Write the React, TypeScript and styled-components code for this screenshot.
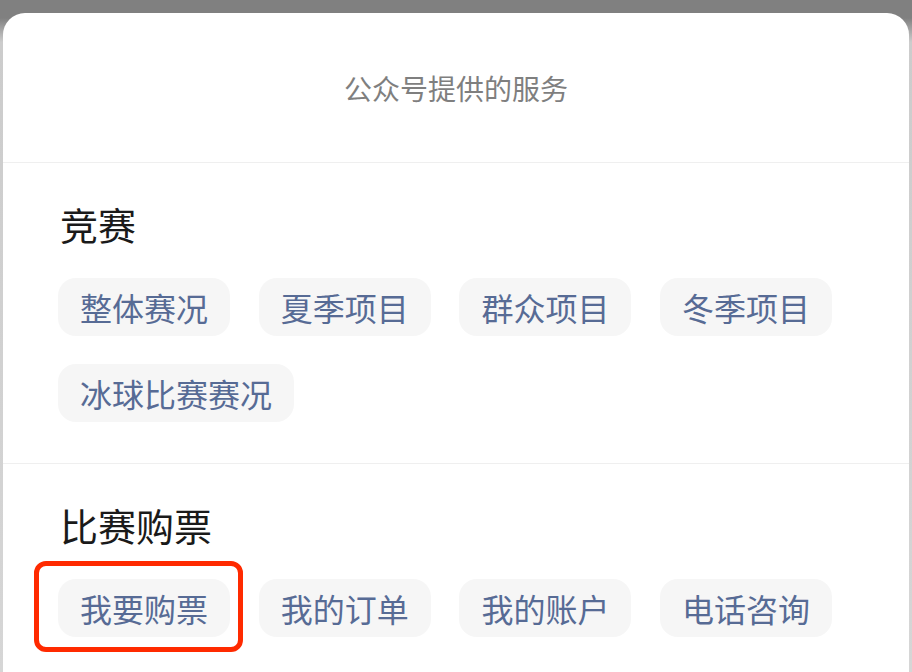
import React from 'react';
import styled, { createGlobalStyle } from 'styled-components';

const GlobalStyle = createGlobalStyle`
  html, body {
    margin: 0;
    padding: 0;
    height: 672px;
    overflow: hidden;
  }
  body {
    background: linear-gradient(#808080 0, #808080 18px, #cccccc 42px, #d6d6d6 100%);
    font-family: "Noto Sans CJK SC", "Noto Sans", sans-serif;
  }
`;

const Sheet = styled.div`
  margin: 13px 3px 0 3px;
  height: 659px;
  background: #ffffff;
  border-radius: 22px 22px 0 0;
  overflow: hidden;
`;

const Header = styled.div`
  box-sizing: border-box;
  height: 150px;
  display: flex;
  align-items: center;
  justify-content: center;
  font-size: 28px;
  line-height: 1;
  color: #7f7f7f;
  border-bottom: 1px solid #efefef;
`;

const Section = styled.section`
  padding: 42px 55px 41px 55px;
  border-bottom: 1px solid #efefef;
`;

const Heading = styled.h2`
  margin: 0 0 35px 2px;
  font-size: 38px;
  font-weight: 400;
  line-height: 1;
  color: #1a1a1a;
`;

const ChipList = styled.div`
  display: flex;
  flex-wrap: wrap;
  column-gap: 28.7px;
  row-gap: 28px;
`;

const ChipWrap = styled.div`
  position: relative;
`;

const Chip = styled.div`
  box-sizing: border-box;
  height: 58px;
  padding: 0 22px;
  display: flex;
  align-items: center;
  border-radius: 18px;
  background: #f6f6f6;
  color: #576b95;
  font-size: 32px;
  line-height: 1;
  white-space: nowrap;
`;

const Highlight = styled.div`
  position: absolute;
  left: -24px;
  right: -13px;
  top: -18px;
  bottom: -15px;
  border: 5px solid #ff2a00;
  border-radius: 12px;
  pointer-events: none;
`;

interface Group {
  title: string;
  items: string[];
  marked?: number;
}

const groups: Group[] = [
  { title: '竞赛', items: ['整体赛况', '夏季项目', '群众项目', '冬季项目', '冰球比赛赛况'] },
  { title: '比赛购票', items: ['我要购票', '我的订单', '我的账户', '电话咨询'], marked: 0 },
];

const App: React.FC = () => (
  <>
    <GlobalStyle />
    <Sheet>
      <Header>公众号提供的服务</Header>
      {groups.map(group => (
        <Section key={group.title}>
          <Heading>{group.title}</Heading>
          <ChipList>
            {group.items.map((item, index) => (
              <ChipWrap key={item}>
                <Chip>{item}</Chip>
                {group.marked === index && <Highlight />}
              </ChipWrap>
            ))}
          </ChipList>
        </Section>
      ))}
    </Sheet>
  </>
);

export default App;
